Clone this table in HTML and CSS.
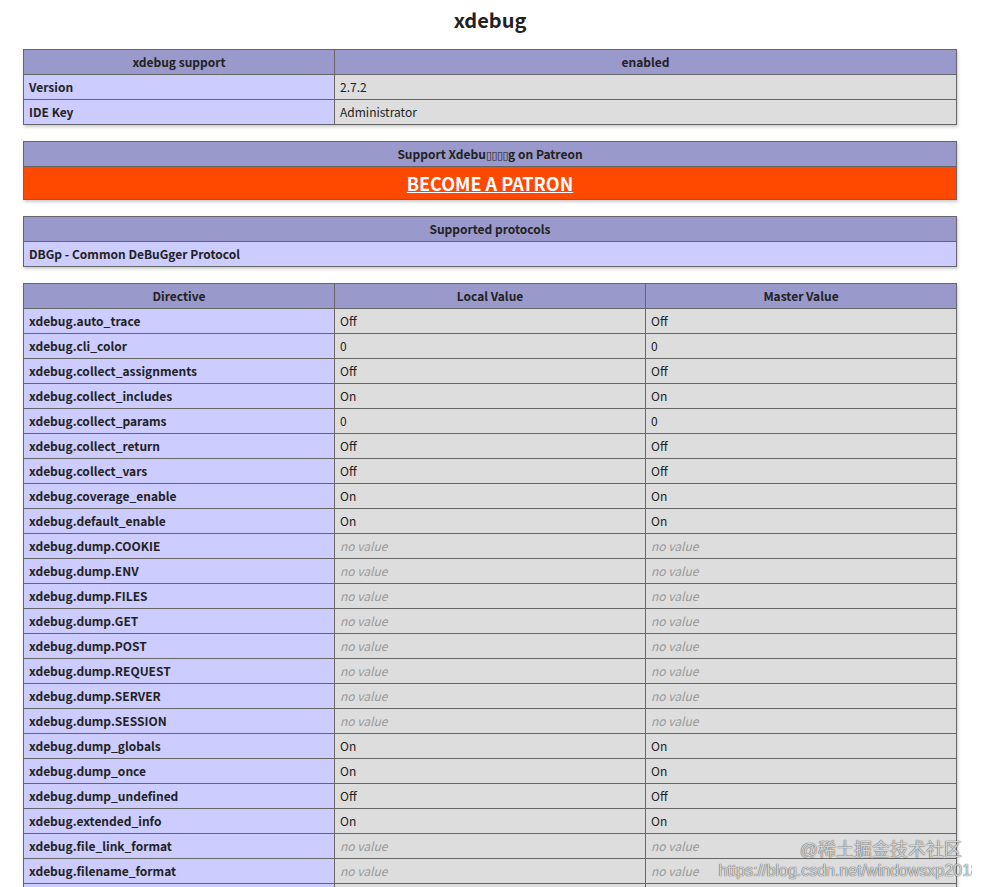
FILE: index.html
```html
<!DOCTYPE html>
<html>
<head>
<meta charset="utf-8">
<title>xdebug</title>
<link rel="stylesheet" href="styles.css">
</head>
<body>
<div class="center">
  <h2>xdebug</h2>
  <table class="t2">
    <colgroup><col class="c1"><col></colgroup>
    <tr class="h"><th>xdebug support</th><th>enabled</th></tr>
    <tr><td class="e">Version</td><td class="v">2.7.2</td></tr>
    <tr><td class="e">IDE Key</td><td class="v">Administrator</td></tr>
  </table>
  <table>
    <tr class="h"><th>Support Xdebu<span class="tofu">▯▯▯▯</span>g on Patreon</th></tr>
    <tr><td class="patron"><a href="#">BECOME A PATRON</a></td></tr>
  </table>
  <table>
    <tr class="h"><th>Supported protocols</th></tr>
    <tr><td class="e">DBGp - Common DeBuGger Protocol</td></tr>
  </table>
  <table class="t3">
    <colgroup><col class="c1"><col class="c1"><col></colgroup>
    <tr class="h"><th>Directive</th><th>Local Value</th><th>Master Value</th></tr>
    <tr><td class="e">xdebug.auto_trace</td><td class="v">Off</td><td class="v">Off</td></tr>
    <tr><td class="e">xdebug.cli_color</td><td class="v">0</td><td class="v">0</td></tr>
    <tr><td class="e">xdebug.collect_assignments</td><td class="v">Off</td><td class="v">Off</td></tr>
    <tr><td class="e">xdebug.collect_includes</td><td class="v">On</td><td class="v">On</td></tr>
    <tr><td class="e">xdebug.collect_params</td><td class="v">0</td><td class="v">0</td></tr>
    <tr><td class="e">xdebug.collect_return</td><td class="v">Off</td><td class="v">Off</td></tr>
    <tr><td class="e">xdebug.collect_vars</td><td class="v">Off</td><td class="v">Off</td></tr>
    <tr><td class="e">xdebug.coverage_enable</td><td class="v">On</td><td class="v">On</td></tr>
    <tr><td class="e">xdebug.default_enable</td><td class="v">On</td><td class="v">On</td></tr>
    <tr><td class="e">xdebug.dump.COOKIE</td><td class="v"><i>no value</i></td><td class="v"><i>no value</i></td></tr>
    <tr><td class="e">xdebug.dump.ENV</td><td class="v"><i>no value</i></td><td class="v"><i>no value</i></td></tr>
    <tr><td class="e">xdebug.dump.FILES</td><td class="v"><i>no value</i></td><td class="v"><i>no value</i></td></tr>
    <tr><td class="e">xdebug.dump.GET</td><td class="v"><i>no value</i></td><td class="v"><i>no value</i></td></tr>
    <tr><td class="e">xdebug.dump.POST</td><td class="v"><i>no value</i></td><td class="v"><i>no value</i></td></tr>
    <tr><td class="e">xdebug.dump.REQUEST</td><td class="v"><i>no value</i></td><td class="v"><i>no value</i></td></tr>
    <tr><td class="e">xdebug.dump.SERVER</td><td class="v"><i>no value</i></td><td class="v"><i>no value</i></td></tr>
    <tr><td class="e">xdebug.dump.SESSION</td><td class="v"><i>no value</i></td><td class="v"><i>no value</i></td></tr>
    <tr><td class="e">xdebug.dump_globals</td><td class="v">On</td><td class="v">On</td></tr>
    <tr><td class="e">xdebug.dump_once</td><td class="v">On</td><td class="v">On</td></tr>
    <tr><td class="e">xdebug.dump_undefined</td><td class="v">Off</td><td class="v">Off</td></tr>
    <tr><td class="e">xdebug.extended_info</td><td class="v">On</td><td class="v">On</td></tr>
    <tr><td class="e">xdebug.file_link_format</td><td class="v"><i>no value</i></td><td class="v"><i>no value</i></td></tr>
    <tr><td class="e">xdebug.filename_format</td><td class="v"><i>no value</i></td><td class="v"><i>no value</i></td></tr>
    <tr><td class="e">xdebug.force_display_errors</td><td class="v">Off</td><td class="v">Off</td></tr>
  </table>
</div>
<div class="watermark">
  <div class="wm1">@稀土掘金技术社区</div>
  <div class="wm2">https://blog.csdn.net/windowsxp2018</div>
</div>
</body>
</html>
```
FILE: styles.css
```css
html, body {
  background-color: #fff;
}
body {
  margin: 7px 12px 8px 8px;
  color: #222;
  font-family: "Noto Sans CJK SC", "Open Sans", sans-serif;
  position: relative;
}
.center {
  text-align: center;
}
h2 {
  margin: 0;
  font-size: 20px;
  line-height: 26px;
  font-weight: bold;
}
table {
  border-collapse: collapse;
  border: 0;
  width: 934px;
  table-layout: fixed;
  box-shadow: 1px 2px 3px #ccc;
  margin: 16px auto;
  text-align: left;
}
col.c1 {
  width: 311px;
}
td, th {
  border: 1px solid #666;
  font-size: 12px;
  line-height: 16px;
  vertical-align: baseline;
  padding: 4px 5px;
}
th {
  text-align: center;
}
.h {
  background-color: #99c;
  font-weight: bold;
}
.e {
  background-color: #ccf;
  font-weight: bold;
}
.v {
  background-color: #ddd;
}
.v i {
  color: #999;
}
.tofu {
  font-family: "DejaVu Sans", sans-serif;
  font-weight: normal;
  font-size: 11px;
  line-height: 1px;
  letter-spacing: -0.5px;
}
.patron {
  background-color: #ff4800;
  text-align: center;
  font-size: 18px;
  line-height: 24px;
  font-weight: bold;
}
.patron a {
  color: #fff;
  text-decoration: underline;
}
.watermark {
  position: absolute;
  left: 680px;
  top: 832px;
  width: 292px;
  text-align: right;
  color: rgba(255, 255, 255, 0.8);
  text-shadow: 0 0 1px rgba(0, 0, 0, 0.75), 0 0 1px rgba(0, 0, 0, 0.4);
  font-family: "Liberation Sans", "Noto Sans CJK SC", sans-serif;
  pointer-events: none;
}
.wm1 {
  font-size: 18px;
  line-height: 22px;
  padding-right: 18px;
}
.wm2 {
  font-size: 16px;
  line-height: 20px;
  white-space: nowrap;
}
```
